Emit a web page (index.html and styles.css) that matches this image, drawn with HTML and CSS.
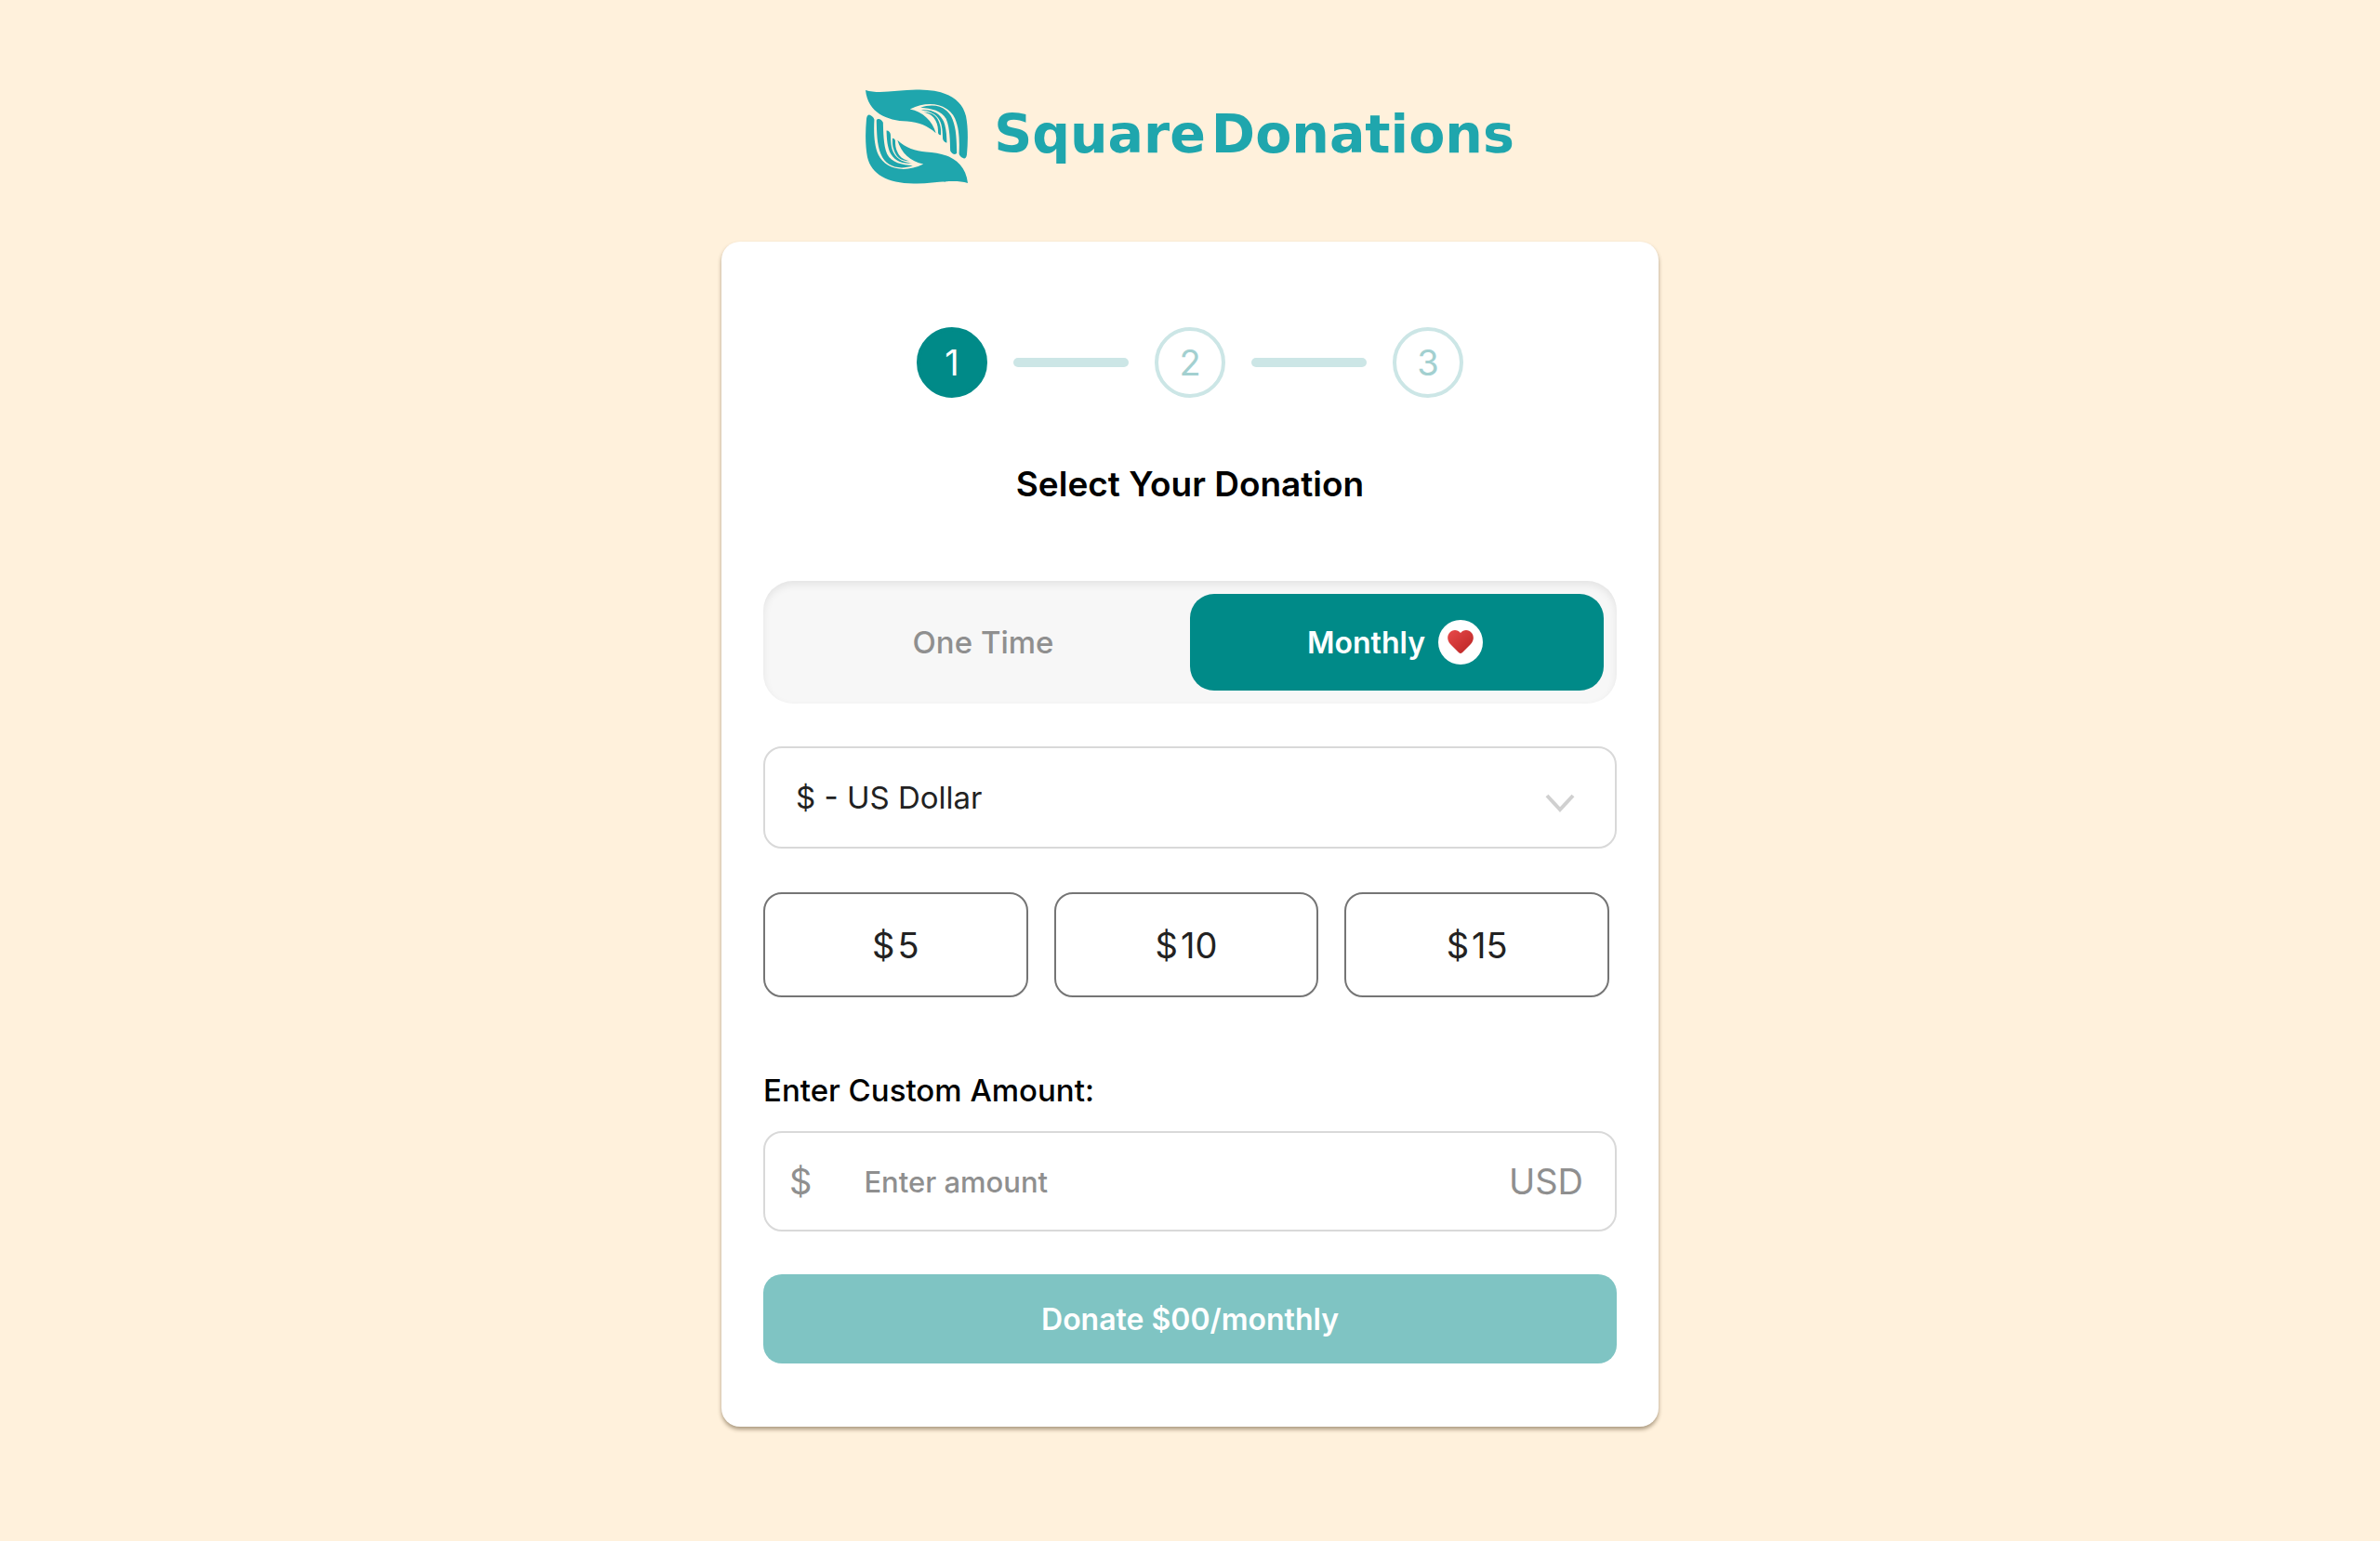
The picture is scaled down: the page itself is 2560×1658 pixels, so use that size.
FILE: index.html
```html
<!DOCTYPE html>
<html lang="en">
<head>
<meta charset="utf-8">
<meta name="viewport" content="width=device-width, initial-scale=1">
<title>Square Donations</title>
<link rel="stylesheet" href="styles.css">
</head>
<body>
<header class="brand">
  <svg class="brand-mark" viewBox="42 36 327 300" aria-hidden="true">
    <defs>
      <g id="hand">
        <path d="M42 37C90 52 150 34 215 36C300 37 350 66 363 120C370 155 370 200 366 243C364 257 358 257 352 254C346 250 342 246 341 240C343 200 342 160 328 128C308 86 250 66 184 98C225 106 256 135 267 175C240 150 210 140 175 137C110 134 50 110 42 37Z"/>
        <path d="M218 93C262 78 304 90 320 130C333 162 333 200 334 238C330 246 318 242 313 231C312 200 312 158 300 130C286 102 252 96 218 93Z"/>
        <path d="M220 101C256 98 280 112 292 138C301 162 301 185 302 205C296 206 290 200 289 193C288 170 288 152 279 134C266 110 244 104 220 101Z"/>
        <path d="M228 108C258 107 272 122 279 145C284 158 283 170 283 181C278 181 275 178 274 174C274 160 273 148 266 135C258 119 246 112 228 108Z"/>
      </g>
    </defs>
    <use href="#hand"/>
    <use href="#hand" transform="rotate(180 205.500 186)"/>
  </svg>
  <h1 class="brand-name"><span>Square</span><span>Donations</span></h1>
</header>

<main class="card">
  <ol class="steps">
    <li class="step step-current" aria-current="step">1</li>
    <li class="step-line" role="presentation"></li>
    <li class="step">2</li>
    <li class="step-line" role="presentation"></li>
    <li class="step">3</li>
  </ol>

  <h2 class="title">Select Your Donation</h2>

  <form class="form">
    <div class="tabs">
      <button class="tab" type="button" aria-pressed="false">One Time</button>
      <button class="tab tab-active" type="button" aria-pressed="true">Monthly
        <span class="heart">
          <svg viewBox="0 0 28 26" aria-hidden="true">
            <defs><linearGradient id="red" x1="0" y1="0" x2="1" y2="1"><stop offset="0" stop-color="#e84a4a"/><stop offset="1" stop-color="#b92323"/></linearGradient></defs>
            <path fill="url(#red)" d="M14 3C11-1 5-1 2 3C-1 7 0 12 3 15L12 24Q14 26 16 24L25 15C28 12 29 7 26 3C23-1 17-1 14 3Z"/>
          </svg>
        </span>
      </button>
    </div>

    <div class="select-wrap">
      <select class="select field" aria-label="Currency">
        <option>$ - US Dollar</option>
      </select>
      <svg class="chevron" viewBox="0 0 32 20" aria-hidden="true"><path d="M2 2L16 17L30 2"/></svg>
    </div>

    <div class="amounts">
      <button class="amount" type="button"><span>$</span><span>5</span></button>
      <button class="amount" type="button"><span>$</span><span>10</span></button>
      <button class="amount" type="button"><span>$</span><span>15</span></button>
    </div>

    <label class="label" for="custom">Enter Custom Amount:</label>
    <div class="custom field">
      <span class="unit">$</span>
      <input class="custom-input" id="custom" type="text" inputmode="decimal" placeholder="Enter amount">
      <span class="unit">USD</span>
    </div>

    <button class="donate" type="submit">Donate $00/monthly</button>
  </form>
</main>
</body>
</html>
```
FILE: styles.css
```css
* {
  box-sizing: border-box;
}

body {
  margin: 0;
  padding: 96px 24px;
  background: #fff1dc;
  color: #000;
  font-family: Inter, "Liberation Sans", sans-serif;
  font-size: 33px;
}

button,
input,
select {
  font: inherit;
  color: inherit;
}

.brand {
  display: flex;
  align-items: center;
  justify-content: center;
  gap: 28px;
  margin-bottom: 62px;
}

.brand-mark {
  width: 110px;
  height: 102px;
  fill: #1fa6ad;
}

.brand-name {
  display: flex;
  gap: 6px;
  margin: 0;
  padding-bottom: 6px;
  color: #1fa6ad;
  font-family: "DejaVu Sans", sans-serif;
  font-size: 57px;
  font-weight: 700;
  line-height: 72px;
}

.card {
  max-width: 1008px;
  margin: 0 auto;
  padding: 92px 45px 68px;
  border-radius: 20px;
  background: #fff;
  box-shadow: 0 3px 4px rgba(70, 50, 20, 0.45);
}

.steps {
  display: flex;
  align-items: center;
  justify-content: center;
  gap: 28px;
  margin: 0 0 69px;
  padding: 0;
  list-style: none;
}

.step {
  display: flex;
  align-items: center;
  justify-content: center;
  width: 76px;
  height: 76px;
  border: 4px solid #cce6e6;
  border-radius: 50%;
  color: #a3d0d0;
  font-size: 38px;
}

.step-current {
  border-color: #008a88;
  background: #008a88;
  color: #fff;
}

.step-line {
  width: 124px;
  height: 10px;
  border-radius: 5px;
  background: #cce6e6;
}

.title {
  margin: 0 0 80px;
  font-size: 37px;
  font-weight: 600;
  line-height: 48px;
  text-align: center;
}

.form {
  display: flex;
  flex-direction: column;
}

.tabs {
  display: grid;
  grid-template-columns: 1fr 1fr;
  margin-bottom: 46px;
  padding: 14px;
  border-radius: 32px;
  background: #f7f7f7;
  box-shadow: inset 0 4px 8px rgba(0, 0, 0, 0.08);
}

.tab {
  display: flex;
  align-items: center;
  justify-content: center;
  gap: 14px;
  height: 104px;
  padding: 0;
  border: 0;
  border-radius: 26px;
  background: none;
  color: #8f8f8f;
  font-weight: 500;
}

.tab-active {
  padding-right: 4px;
  background: #008a88;
  color: #fff;
  font-size: 32px;
  font-weight: 600;
}

.heart {
  display: flex;
  align-items: center;
  justify-content: center;
  width: 48px;
  height: 48px;
  border-radius: 50%;
  background: #fff;
}

.heart svg {
  width: 28px;
  height: 26px;
}

.field {
  border: 2px solid #d9d9d9;
  border-radius: 20px;
  background: #fff;
}

.select-wrap {
  display: grid;
  align-items: center;
  margin-bottom: 47px;
}

.select-wrap > * {
  grid-area: 1 / 1;
}

.select {
  width: 100%;
  height: 110px;
  padding: 0 80px 0 33px;
  color: #222;
  appearance: none;
}

.chevron {
  justify-self: end;
  width: 32px;
  height: 20px;
  margin: 12px 45px 0 0;
  fill: none;
  stroke: #d0d0d0;
  stroke-width: 4;
  pointer-events: none;
}

.amounts {
  display: grid;
  grid-template-columns: repeat(3, 1fr);
  gap: 28px;
  margin: 0 8px 76px 0;
}

.amount {
  display: flex;
  align-items: center;
  justify-content: center;
  gap: 3px;
  height: 113px;
  padding: 0;
  border: 2px solid #757575;
  border-radius: 20px;
  background: #fff;
  color: #222;
  font-size: 38px;
}

.label {
  margin-bottom: 20px;
  font-weight: 500;
  line-height: 48px;
}

.custom {
  display: flex;
  align-items: center;
  height: 108px;
  margin-bottom: 46px;
  padding: 0 34px 0 26px;
}

.unit {
  color: #8f8f8f;
  font-size: 38px;
}

.custom-input {
  flex: 1;
  min-width: 0;
  padding: 0 56px;
  border: 0;
  outline: 0;
  background: none;
  font-size: 31px;
  font-weight: 500;
}

.custom-input::placeholder {
  color: #8f8f8f;
  opacity: 1;
}

.donate {
  height: 96px;
  padding: 0;
  border: 0;
  border-radius: 20px;
  background: #7fc4c3;
  color: #fff;
  font-size: 32px;
  font-weight: 600;
}
```
